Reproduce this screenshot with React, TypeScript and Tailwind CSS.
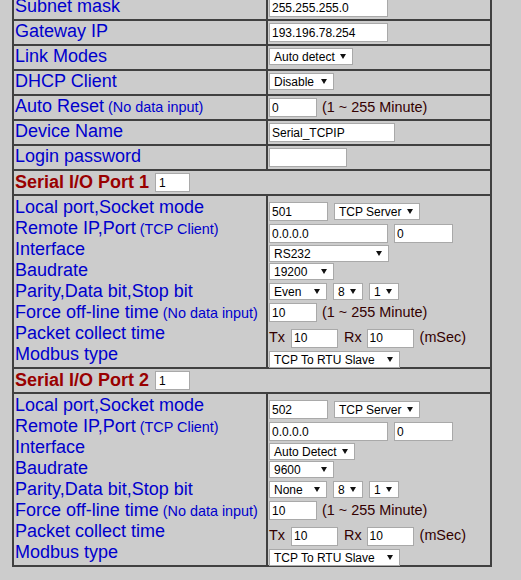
import React from 'react'

function Field({ value, w, type = 'text' }: { value: string; w: string; type?: string }) {
  return (
    <input
      type={type}
      readOnly
      value={value}
      className={`h-[19px] ${w} shrink-0 border border-[#a9a9a9] bg-white px-[2px] text-[12px] leading-[17px] text-black outline-none`}
    />
  )
}

function Drop({ label, w }: { label: string; w: string }) {
  return (
    <div
      className={`flex h-[17px] ${w} shrink-0 items-center justify-between border border-[#a9a9a9] bg-white pl-[4px] pr-[6px] text-[12px] leading-none text-black`}
    >
      <span>{label}</span>
      <svg width="6" height="5" viewBox="0 0 6 5">
        <path d="M0 0H6L3 5Z" fill="#111" />
      </svg>
    </div>
  )
}

function Note({ children }: { children: React.ReactNode }) {
  return <span className="text-[14.4px] leading-[19px] text-[#330000]">{children}</span>
}

function Row({
  label,
  note,
  first,
  children,
}: {
  label: string
  note?: string
  first?: boolean
  children: React.ReactNode
}) {
  return (
    <div className={`flex border-[#404040] ${first ? '' : 'border-t-2'}`}>
      <div className="h-[23px] w-[252px] shrink-0 pl-[1px] text-[18px] leading-[21px] text-[#0000cc]">
        <span>
          {label}
          {note && <span className="text-[14.4px]"> {note}</span>}
        </span>
      </div>
      <div className="flex h-[23px] flex-1 items-start gap-[5px] border-l-2 border-[#404040] pl-[1px] pt-[2px]">
        {children}
      </div>
    </div>
  )
}

function PortHeader({ n }: { n: number }) {
  return (
    <div className="flex h-[25px] items-center border-t-2 border-[#404040] pl-[1px]">
      <span className="text-[18px] font-bold leading-[21px] text-[#990000]">Serial I/O Port {n}</span>
      <input
        readOnly
        value="1"
        className="ml-[6px] h-[19px] w-[35px] border border-[#a9a9a9] bg-white px-[3px] text-[12px] text-black outline-none"
      />
    </div>
  )
}

const portLabels: { label: string; note?: string }[] = [
  { label: 'Local port,Socket mode' },
  { label: 'Remote IP,Port', note: '(TCP Client)' },
  { label: 'Interface' },
  { label: 'Baudrate' },
  { label: 'Parity,Data bit,Stop bit' },
  { label: 'Force off-line time', note: '(No data input)' },
  { label: 'Packet collect time' },
  { label: 'Modbus type' },
]

function PortBody({
  port,
  iface,
  ifaceW,
  baud,
  parity,
}: {
  port: string
  iface: string
  ifaceW: string
  baud: string
  parity: string
}) {
  return (
    <div className="flex border-t-2 border-[#404040]">
      <div className="h-[171px] w-[252px] shrink-0 pl-[1px] pt-[1px] text-[18px] text-[#0000cc]">
        {portLabels.map(({ label, note }) => (
          <div key={label} className="h-[21px] leading-[21px] whitespace-nowrap">
            {label}
            {note && <span className="text-[14.4px]"> {note}</span>}
          </div>
        ))}
      </div>
      <div className="flex h-[171px] flex-1 flex-col items-start border-l-2 border-[#404040] pl-[1px] pt-[6px]">
        <div className="flex items-center gap-[6px]">
          <Field value={port} w="w-[59px]" />
          <Drop label="TCP Server" w="w-[86px]" />
        </div>
        <div className="mt-[3px] flex items-center gap-[6px]">
          <Field value="0.0.0.0" w="w-[119px]" />
          <Field value="0" w="w-[59px]" />
        </div>
        <div className="mt-[2px]">
          <Drop label={iface} w={ifaceW} />
        </div>
        <div className="mt-[1px]">
          <Drop label={baud} w="w-[65px]" />
        </div>
        <div className="mt-[3px] flex items-center gap-[6px]">
          <Drop label={parity} w="w-[58px]" />
          <Drop label="8" w="w-[30px]" />
          <Drop label="1" w="w-[30px]" />
        </div>
        <div className="mt-[3px] flex items-center gap-[5px]">
          <Field value="10" w="w-[48px]" />
          <Note>(1 ~ 255 Minute)</Note>
        </div>
        <div className="mt-[3px] flex items-center">
          <Note>Tx</Note>
          <span className="ml-[6px]">
            <Field value="10" w="w-[47px]" />
          </span>
          <span className="ml-[6px]">
            <Note>Rx</Note>
          </span>
          <span className="ml-[5px]">
            <Field value="10" w="w-[47px]" />
          </span>
          <span className="ml-[6px]">
            <Note>(mSec)</Note>
          </span>
        </div>
        <div className="mt-[2px]">
          <Drop label="TCP To RTU Slave" w="w-[131px]" />
        </div>
      </div>
    </div>
  )
}

export default function App() {
  return (
    <div className="h-[580px] w-[521px] overflow-hidden bg-[#cccccc] font-['Liberation_Sans',Arial,sans-serif]">
      <div className="ml-[12px] mt-[-6px] w-[480px] border-2 border-[#404040]">
        <Row label="Subnet mask" first>
          <Field value="255.255.255.0" w="w-[119px]" />
        </Row>
        <Row label="Gateway IP">
          <Field value="193.196.78.254" w="w-[119px]" />
        </Row>
        <Row label="Link Modes">
          <Drop label="Auto detect" w="w-[84px]" />
        </Row>
        <Row label="DHCP Client">
          <Drop label="Disable" w="w-[65px]" />
        </Row>
        <Row label="Auto Reset" note="(No data input)">
          <Field value="0" w="w-[48px]" />
          <Note>(1 ~ 255 Minute)</Note>
        </Row>
        <Row label="Device Name">
          <Field value="Serial_TCPIP" w="w-[126px]" />
        </Row>
        <Row label="Login password">
          <Field value="" type="password" w="w-[78px]" />
        </Row>
        <PortHeader n={1} />
        <PortBody port="501" iface="RS232" ifaceW="w-[120px]" baud="19200" parity="Even" />
        <PortHeader n={2} />
        <PortBody port="502" iface="Auto Detect" ifaceW="w-[86px]" baud="9600" parity="None" />
      </div>
    </div>
  )
}
